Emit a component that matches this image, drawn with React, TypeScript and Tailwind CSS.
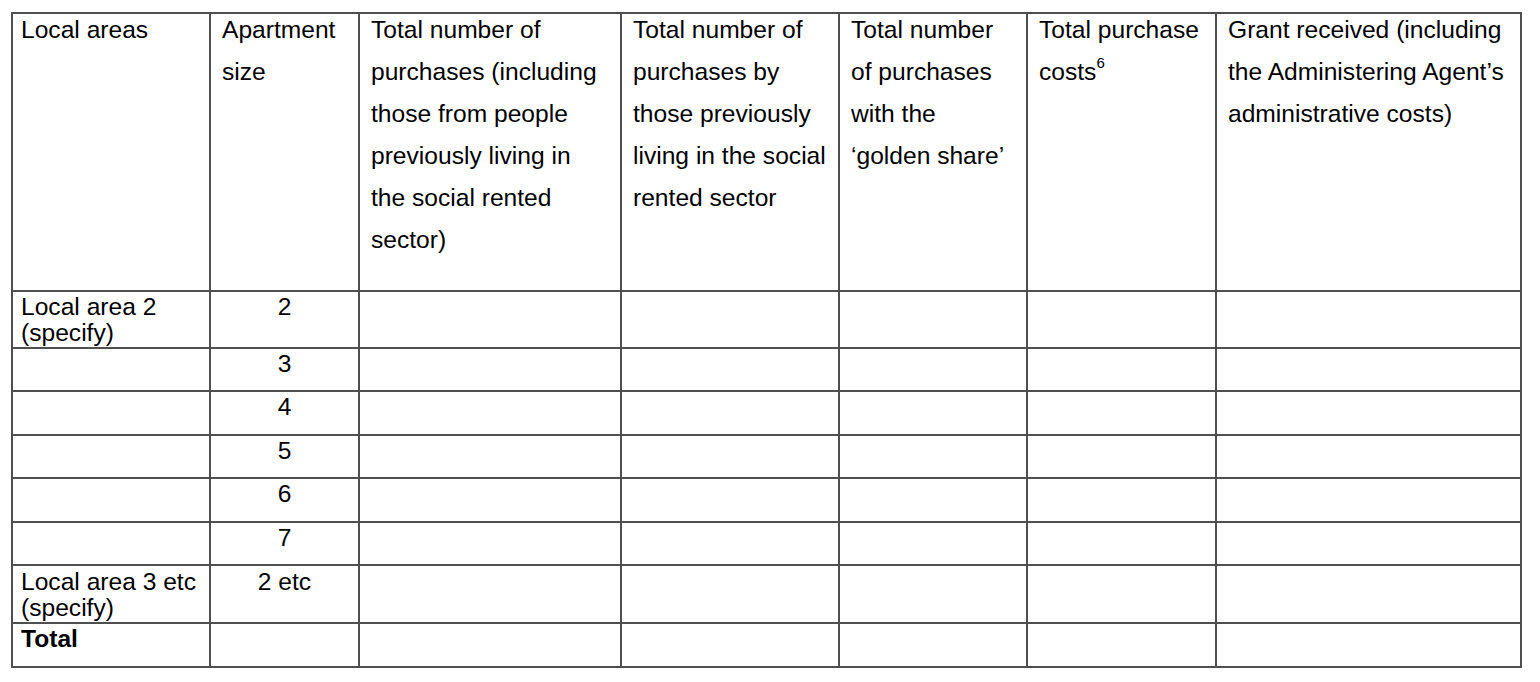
import React from "react";

type Row = { a: React.ReactNode; b: string; pt: string; bold?: boolean };

const rows: Row[] = [
  { a: <>Local area 2<br />(specify)</>, b: "2", pt: "pt-[2px]" },
  { a: "", b: "3", pt: "pt-[2px]" },
  { a: "", b: "4", pt: "pt-[2px]" },
  { a: "", b: "5", pt: "pt-[2px]" },
  { a: "", b: "6", pt: "pt-[2px]" },
  { a: "", b: "7", pt: "pt-[2px]" },
  { a: <>Local area 3 etc<br />(specify)</>, b: "2 etc", pt: "pt-[3px]" },
  { a: "Total", b: "", pt: "pt-[2px]", bold: true },
];

function Head({ children, first }: { children: React.ReactNode; first?: boolean }) {
  return (
    <div className={`bg-white ${first ? "pl-[8px]" : "pl-[11px]"} pr-[2px] overflow-hidden`}>
      <div className="-mt-[5px] leading-[42px] whitespace-nowrap">{children}</div>
    </div>
  );
}

export default function App() {
  return (
    <div className="min-h-[682px] w-[1540px] bg-white text-black font-['Liberation_Sans',Arial,sans-serif] text-[24.6px] pt-[12px] pl-[11px]">
      <div className="w-[1511px] grid grid-cols-[196px_147px_260px_216px_186px_187px_303px] grid-rows-[276px_55px_41px_42px_41px_42px_41px_56px_42px] gap-[2px] p-[2px] bg-[#4f4f4f]">
        <Head first>Local areas</Head>
        <Head>
          Apartment
          <br />
          size
        </Head>
        <Head>
          Total number of
          <br />
          purchases (including
          <br />
          those from people
          <br />
          previously living in
          <br />
          the social rented
          <br />
          sector)
        </Head>
        <Head>
          Total number of
          <br />
          purchases by
          <br />
          those previously
          <br />
          living in the social
          <br />
          rented sector
        </Head>
        <Head>
          Total number
          <br />
          of purchases
          <br />
          with the
          <br />
          ‘golden share’
        </Head>
        <Head>
          Total purchase
          <br />
          costs<sup className="text-[15px] align-[5px] leading-none">6</sup>
        </Head>
        <Head>
          Grant received (including
          <br />
          the Administering Agent’s
          <br />
          administrative costs)
        </Head>

        {rows.map((r, i) => (
          <React.Fragment key={i}>
            <div className={`bg-white pl-[8px] ${r.pt} leading-[26px] whitespace-nowrap ${r.bold ? "font-bold" : ""}`}>
              {r.a}
            </div>
            <div className={`bg-white ${r.pt} leading-[26px] text-center whitespace-nowrap`}>{r.b}</div>
            <div className="bg-white" />
            <div className="bg-white" />
            <div className="bg-white" />
            <div className="bg-white" />
            <div className="bg-white" />
          </React.Fragment>
        ))}
      </div>
    </div>
  );
}
